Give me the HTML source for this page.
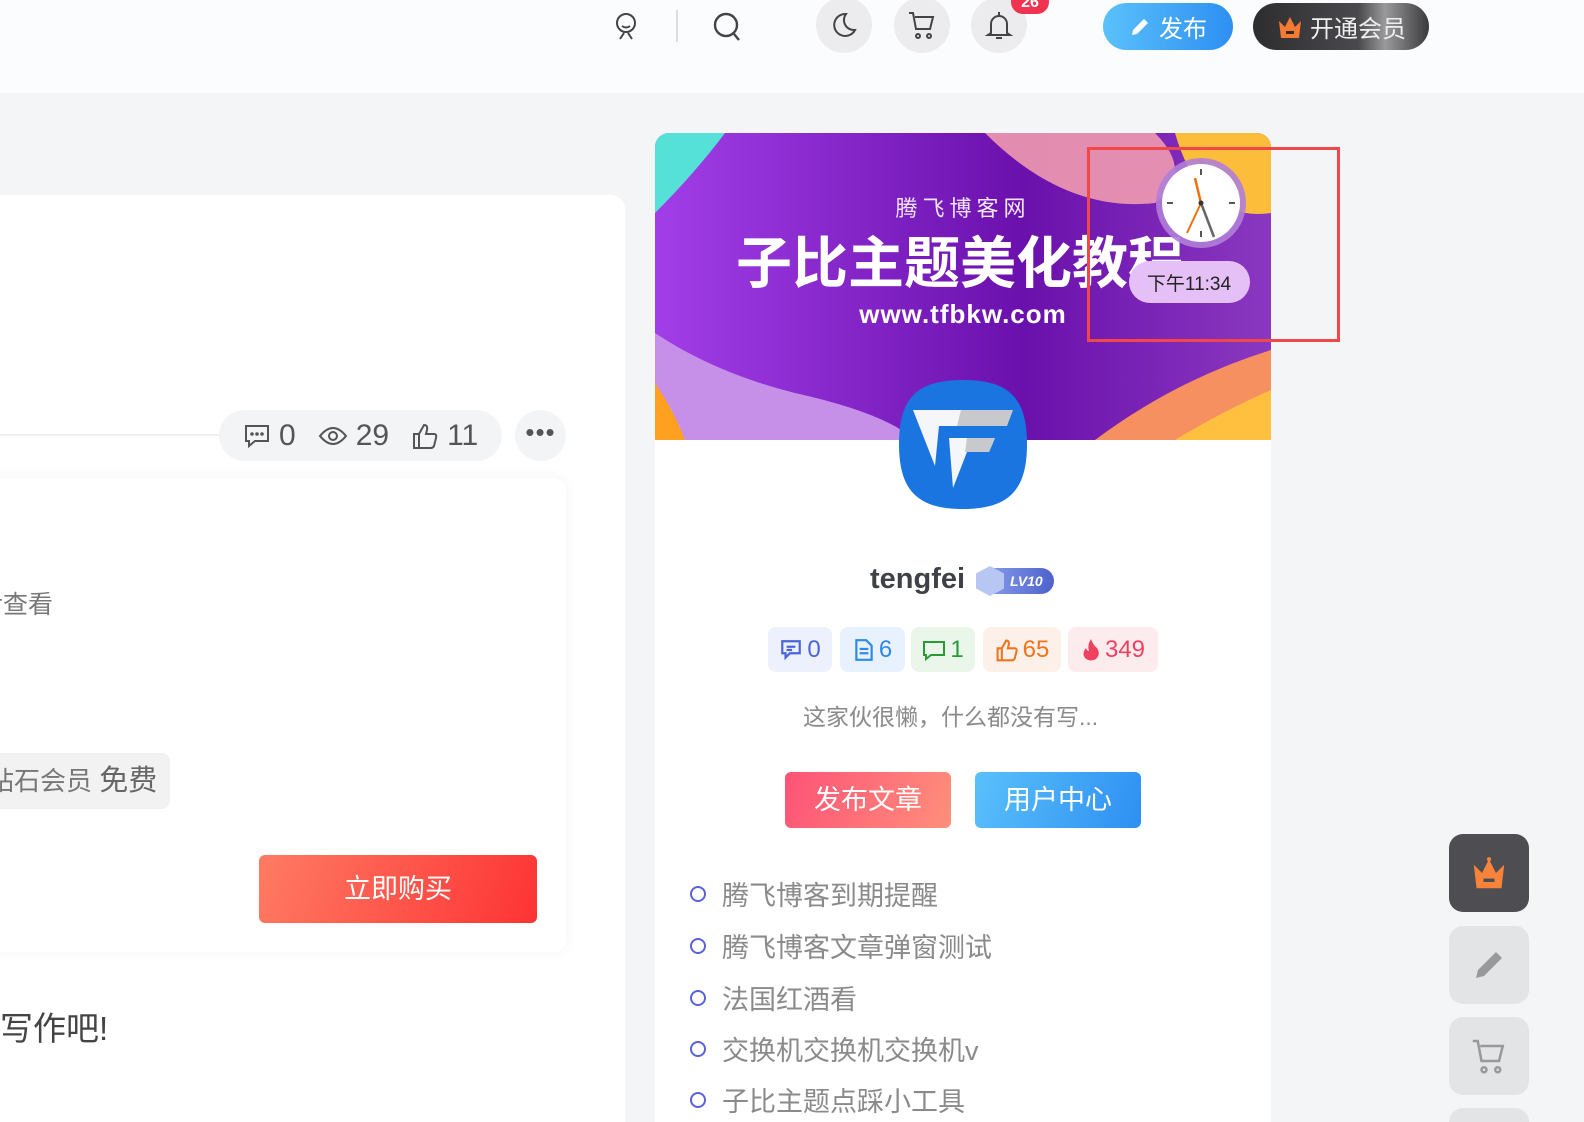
<!DOCTYPE html>
<html style="width:1584px;height:1122px;overflow:hidden"><head><meta charset="utf-8">
<style>
*{margin:0;padding:0;box-sizing:border-box}
body{width:1584px;height:1122px;overflow:hidden;background:#f4f5f7;font-family:"Liberation Sans","Noto Sans CJK SC",sans-serif;position:relative}
.abs{position:absolute}
.hdr{left:0;top:0;width:1584px;height:93px;background:#fbfcfe}
.circ{width:56px;height:56px;border-radius:50%;background:#ececee;display:flex;align-items:center;justify-content:center}
.lcard{left:-20px;top:195px;width:645px;height:927px;background:#fff;border-radius:14px 14px 0 0}
.rcard{left:655px;top:133px;width:616px;height:989px;background:#fff;border-radius:14px 14px 0 0;overflow:hidden}
.stat{height:45px;border-radius:8px;display:flex;align-items:center;justify-content:center;gap:4px;font-size:24px;top:627px}
.li{left:690px;font-size:27px;color:#8a8a8a;display:flex;align-items:center;white-space:nowrap}
.li:before{content:"";width:12px;height:12px;border:2px solid #5b61d6;border-radius:50%;margin-right:16px}
.side{left:1449px;width:80px;height:78px;border-radius:14px;background:#e3e4e6;display:flex;align-items:center;justify-content:center}
</style></head><body>
<div class="abs hdr"></div>
<svg class="abs" style="left:612px;top:10px" width="28" height="32" viewBox="0 0 28 32" fill="none" stroke="#444" stroke-width="2"><circle cx="14" cy="13" r="9"/><path d="M10 16q4 3 8 0M8 29l4-6M20 29l-4-6"/></svg>
<div class="abs" style="left:676px;top:10px;width:2px;height:32px;background:#ddd"></div>
<svg class="abs" style="left:710px;top:10px" width="34" height="34" viewBox="0 0 34 34" fill="none" stroke="#444" stroke-width="2.4"><circle cx="16" cy="15" r="11"/><path d="M24 24l5 6"/></svg>
<div class="abs circ" style="left:816px;top:-3px"><svg width="28" height="28" viewBox="0 0 28 28" fill="none" stroke="#444" stroke-width="2"><path d="M16 3a11 11 0 1 0 9 16A10 10 0 0 1 16 3z"/></svg></div>
<div class="abs circ" style="left:894px;top:-3px"><svg width="32" height="32" viewBox="0 0 32 32" fill="none" stroke="#444" stroke-width="2"><path d="M3 4h4l3 16h14l3-12H9"/><circle cx="12" cy="27" r="2"/><circle cx="23" cy="27" r="2"/></svg></div>
<div class="abs circ" style="left:971px;top:-3px"><svg width="30" height="32" viewBox="0 0 30 32" fill="none" stroke="#444" stroke-width="2"><path d="M15 3v3M7 24V15a8 8 0 0 1 16 0v9l3 2H4z"/><path d="M12 29h6"/></svg></div>
<div class="abs" style="left:1011px;top:-10px;width:38px;height:24px;border-radius:12px;background:#f0344f;color:#fff;font-size:16px;font-weight:bold;text-align:center;line-height:26px">26</div>
<div class="abs" style="left:1103px;top:3px;width:130px;height:47px;border-radius:24px;background:linear-gradient(90deg,#5ac1fb,#2e8ff2);color:#fff;font-size:24px;display:flex;align-items:center;justify-content:center;gap:8px"><svg width="22" height="22" viewBox="0 0 22 22"><path d="M3 19l1-5L15 3l4 4L8 18z" fill="#fff"/></svg>发布</div>
<div class="abs" style="left:1253px;top:3px;width:176px;height:47px;border-radius:24px;background:linear-gradient(90deg,#2d2d30,#4a4a4e 60%,#9a9a9c 75%,#3a3a3d);color:#eee;font-size:24px;display:flex;align-items:center;justify-content:center;gap:6px"><svg width="28" height="26" viewBox="0 0 28 26"><path d="M3 7l6 6 5-10 5 10 6-6-2 17H5z" fill="#f57a32"/><rect x="10" y="17" width="8" height="3" fill="#3a2a20"/></svg>开通会员</div>

<div class="abs lcard"></div>
<div class="abs" style="left:0;top:434px;width:230px;height:2px;background:#f0f0f2"></div>
<div class="abs" style="left:219px;top:410px;width:283px;height:51px;border-radius:26px;background:#f3f4f6;display:flex;align-items:center;gap:8px;padding-left:24px;font-size:30px;color:#555">
<svg width="28" height="26" viewBox="0 0 28 26" fill="none" stroke="#555" stroke-width="2"><path d="M3 3h22v15H12l-6 5v-5H3z"/><circle cx="9" cy="11" r=".8" fill="#555"/><circle cx="14" cy="11" r=".8" fill="#555"/><circle cx="19" cy="11" r=".8" fill="#555"/></svg><span>0</span>
<svg style="margin-left:14px" width="30" height="22" viewBox="0 0 30 22" fill="none" stroke="#555" stroke-width="2"><path d="M2 11q13-16 26 0q-13 16-26 0z"/><circle cx="15" cy="11" r="4"/></svg><span>29</span>
<svg style="margin-left:14px" width="28" height="28" viewBox="0 0 28 28" fill="none" stroke="#555" stroke-width="2"><path d="M3 12h5v14H3zM8 12l5-9q4 0 3 5l-1 4h8q3 0 2 4l-2 8q-1 2-3 2H8"/></svg><span>11</span></div>
<div class="abs" style="left:515px;top:410px;width:51px;height:51px;border-radius:50%;background:#f3f4f6;color:#555;font-size:26px;text-align:center;line-height:44px;letter-spacing:1px">•••</div>
<div class="abs" style="left:-20px;top:478px;width:586px;height:474px;border-radius:12px;background:#fff;box-shadow:0 0 14px rgba(0,0,0,.05)"></div>
<div class="abs" style="left:-22px;top:585px;font-size:25px;color:#777">后查看</div>
<div class="abs" style="left:-20px;top:753px;width:190px;height:56px;border-radius:8px;background:#f2f2f3;font-size:26px;color:#777;line-height:56px;padding-left:8px;white-space:nowrap;overflow:hidden">钻石会员 <b style="font-weight:normal;color:#666;font-size:29px">免费</b></div>
<div class="abs" style="left:259px;top:855px;width:278px;height:68px;border-radius:6px;background:linear-gradient(110deg,#ff7b64,#fd3333);color:#fff;font-size:27px;text-align:center;line-height:68px">立即购买</div>
<div class="abs" style="left:0;top:1002px;font-size:33px;color:#444">写作吧!</div>

<div class="abs rcard">
 <svg width="616" height="307" viewBox="0 0 616 307" style="display:block">
  <defs><linearGradient id="g" x1="0" x2="1"><stop offset="0" stop-color="#a23ee8"/><stop offset=".6" stop-color="#6a10ac"/><stop offset="1" stop-color="#8a38c0"/></linearGradient></defs>
  <rect width="616" height="307" fill="url(#g)"/>
  <path d="M0 0h70q-30 40-70 80z" fill="#55e0d8"/>
  <path d="M330 0h170q40 40 0 70q-90 10-170-70z" fill="#f09ab0" opacity=".9"/>
  <path d="M520 0h96v80q-70 10-96-80z" fill="#fcbd3a"/>
  <path d="M0 200q60 40 140 60 90 20 120 47H0z" fill="#c690e8"/>
  <path d="M0 250q20 30 30 57H0z" fill="#ffa020"/>
  <path d="M440 307q80-60 176-90v90z" fill="#f79060"/>
  <path d="M520 307q50-30 96-50v50z" fill="#ffc040"/>
  <text x="308" y="83" fill="#f0e6ff" font-size="22" text-anchor="middle" letter-spacing="5" font-family="Noto Sans CJK SC">腾飞博客网</text>
  <text x="305" y="150" fill="#fff" font-size="56" font-weight="bold" text-anchor="middle" font-family="Noto Sans CJK SC">子比主题美化教程</text>
  <text x="308" y="190" fill="#fff" font-size="26" font-weight="bold" text-anchor="middle" letter-spacing="1" font-family="Liberation Sans">www.tfbkw.com</text>
  <circle cx="546" cy="70" r="45" fill="#b07ed8" opacity=".9"/>
  <circle cx="546" cy="70" r="39" fill="#fff"/>
  <g stroke="#555" stroke-width="2"><path d="M546 36v6M546 98v6M512 70h6M574 70h6"/></g>
  <path d="M546 70l-6-25" stroke="#f07010" stroke-width="2.5"/>
  <path d="M546 70l-14 30" stroke="#f07010" stroke-width="2"/>
  <path d="M546 70l13 34" stroke="#666" stroke-width="2.5"/>
  <circle cx="546" cy="70" r="2.5" fill="#333"/>
  <rect x="474" y="128" width="121" height="42" rx="21" fill="#e4c0f7"/>
  <text x="534" y="157" font-size="19" text-anchor="middle" fill="#222" font-family="Liberation Sans,Noto Sans CJK SC">下午11:34</text>
 </svg>
</div>
<div class="abs" style="left:1087px;top:147px;width:253px;height:195px;border:3px solid #f04848"></div>
<svg class="abs" style="left:897px;top:378px" width="132" height="133" viewBox="0 0 132 133"><path d="M66 2C20 2 2 20 2 66s18 65 64 65 64-19 64-65S112 2 66 2z" fill="#1a75e0"/><path d="M16 32h48l-2 16H42l-4 40z" fill="#f4f6fa"/><path d="M64 32h52l-6 16H60z" fill="#c7c9cd"/><path d="M52 60h46l-6 14H70l-14 36z" fill="#f4f6fa"/><path d="M70 60h28l-6 14H68z" fill="#c7c9cd"/></svg>
<div class="abs" style="left:870px;top:563px;font-size:29px;font-weight:bold;color:#3e4145">tengfei</div>
<div class="abs" style="left:978px;top:568px;width:76px;height:26px;border-radius:13px;background:linear-gradient(90deg,#8ea4ee,#4d62cc);color:#fff;font-size:14px;font-style:italic;font-weight:bold;line-height:26px;padding-left:32px">LV10</div>
<div class="abs" style="left:976px;top:566px;width:28px;height:30px;background:#b8c6f4;clip-path:polygon(50% 0,100% 25%,100% 75%,50% 100%,0 75%,0 25%)"></div>
<div class="abs stat" style="left:768px;width:64px;background:#ecf1fd;color:#4b64d8"><svg width="24" height="24" viewBox="0 0 22 22" fill="none" stroke="#4b64d8" stroke-width="2"><path d="M3 3h16v11h-9l-4 4v-4H3zM7 8h8M7 11h5"/></svg>0</div>
<div class="abs stat" style="left:840px;width:65px;background:#e8f2fe;color:#2e8ae6"><svg width="22" height="24" viewBox="0 0 20 22" fill="none" stroke="#2e8ae6" stroke-width="2"><path d="M3 2h9l5 5v13H3zM6 10h8M6 14h8"/></svg>6</div>
<div class="abs stat" style="left:911px;width:64px;background:#eaf6ea;color:#2a9a36"><svg width="24" height="22" viewBox="0 0 24 22" fill="none" stroke="#2a9a36" stroke-width="2"><path d="M2 3h20v13H9l-5 4v-4H2z"/></svg>1</div>
<div class="abs stat" style="left:983px;width:78px;background:#fdf0e8;color:#ed7520"><svg width="24" height="24" viewBox="0 0 28 28" fill="none" stroke="#ed7520" stroke-width="2.4"><path d="M3 12h5v14H3zM8 12l5-9q4 0 3 5l-1 4h8q3 0 2 4l-2 8q-1 2-3 2H8"/></svg>65</div>
<div class="abs stat" style="left:1068px;width:90px;background:#fdecee;color:#ef4060"><svg width="20" height="24" viewBox="0 0 20 24"><path d="M10 1q2 6 6 9 4 6-1 11-5 3-10 0-5-5 0-11 1 3 3 3-2-6 2-12z" fill="#ef4060"/></svg>349</div>
<div class="abs" style="left:803px;top:698px;font-size:23px;color:#8a8a8a;white-space:nowrap">这家伙很懒，什么都没有写...</div>
<div class="abs" style="left:785px;top:772px;width:166px;height:56px;border-radius:6px;background:linear-gradient(110deg,#fd5377,#fe8f7a);color:#fff;font-size:27px;text-align:center;line-height:56px">发布文章</div>
<div class="abs" style="left:975px;top:772px;width:166px;height:56px;border-radius:6px;background:linear-gradient(110deg,#5ac1fb,#2e8ff2);color:#fff;font-size:27px;text-align:center;line-height:56px">用户中心</div>
<div class="abs li" style="top:874px">腾飞博客到期提醒</div>
<div class="abs li" style="top:926px">腾飞博客文章弹窗测试</div>
<div class="abs li" style="top:978px">法国红酒看</div>
<div class="abs li" style="top:1029px">交换机交换机交换机v</div>
<div class="abs li" style="top:1080px">子比主题点踩小工具</div>

<div class="abs side" style="top:834px;background:#4d4d52"><svg width="42" height="36" viewBox="0 0 28 26"><path d="M3 7l6 6 5-10 5 10 6-6-2 17H5z" fill="#f7843a"/><circle cx="14" cy="3" r="1.5" fill="#f7843a"/><rect x="10" y="17" width="8" height="2.5" fill="#4d4d52"/></svg></div>
<div class="abs side" style="top:926px"><svg width="36" height="36" viewBox="0 0 36 36"><path d="M5 31l2-8L25 5l6 6-18 18z" fill="#999"/></svg></div>
<div class="abs side" style="top:1017px"><svg width="40" height="40" viewBox="0 0 32 32" fill="none" stroke="#999" stroke-width="2"><path d="M3 4h4l3 16h14l3-12H9"/><circle cx="12" cy="27" r="2"/><circle cx="23" cy="27" r="2"/></svg></div>
<div class="abs side" style="top:1108px;height:14px;border-radius:14px 14px 0 0"></div>
</body></html>
